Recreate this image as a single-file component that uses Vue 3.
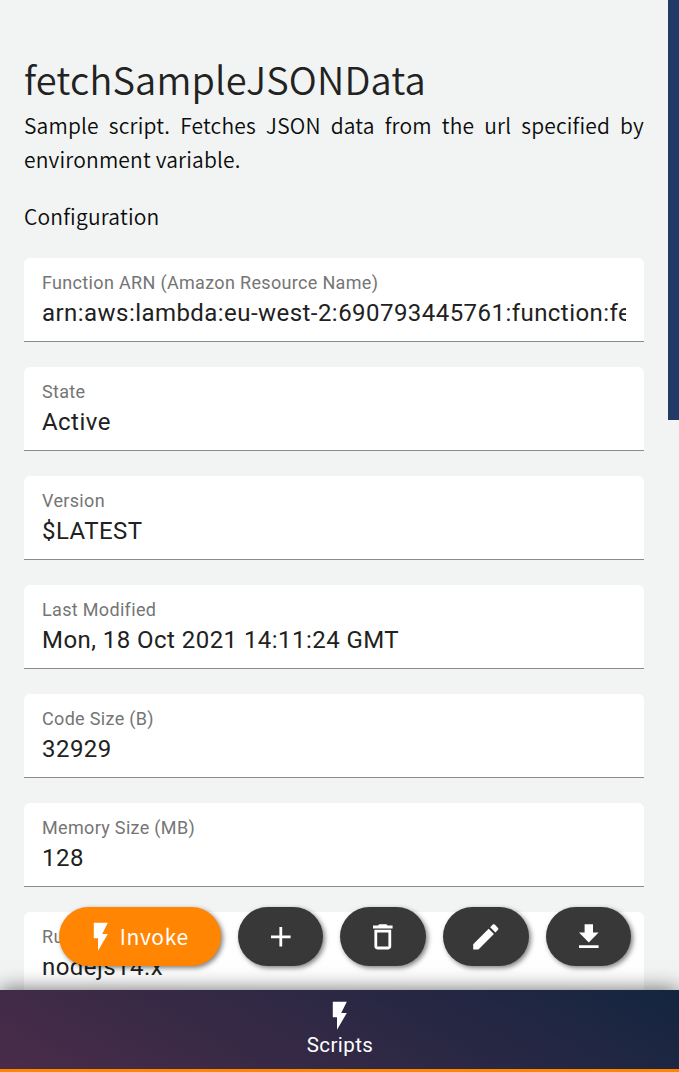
<script setup>
const fields = [
  { label: 'Function ARN (Amazon Resource Name)', value: 'arn:aws:lambda:eu-west-2:690793445761:function:fetchSampleJSONData' },
  { label: 'State', value: 'Active' },
  { label: 'Version', value: '$LATEST' },
  { label: 'Last Modified', value: 'Mon, 18 Oct 2021 14:11:24 GMT' },
  { label: 'Code Size (B)', value: '32929' },
  { label: 'Memory Size (MB)', value: '128' },
  { label: 'Runtime', value: 'nodejs14.x' },
]

const bolt = 'M7 2v11h3v9l7-12h-4l4-8z'

const actions = [
  { name: 'Add', icon: 'M19 13h-6v6h-2v-6H5v-2h6V5h2v6h6v2z' },
  { name: 'Delete', icon: 'M6 19c0 1.1.9 2 2 2h8c1.1 0 2-.9 2-2V7H6v12zM8 9h8v10H8V9zm7.5-5l-1-1h-5l-1 1H5v2h14V4z' },
  { name: 'Edit', icon: 'M3 17.25V21h3.75L17.81 9.94l-3.75-3.75L3 17.25zM20.71 7.04c.39-.39.39-1.02 0-1.41l-2.34-2.34c-.39-.39-1.02-.39-1.41 0l-1.83 1.83 3.75 3.75 1.83-1.83z' },
  { name: 'Download', icon: 'M19 9h-4V3H9v6H5l7 7 7-7zM5 18v2h14v-2H5z' },
]
</script>

<template>
  <div class="app">
    <div class="viewport">
      <main class="page">
        <h1>fetchSampleJSONData</h1>
        <p class="description">Sample script. Fetches JSON data from the url specified by environment variable.</p>
        <h2>Configuration</h2>
        <div class="fields">
          <div v-for="f in fields" :key="f.label" class="field">
            <div class="label">{{ f.label }}</div>
            <input class="value" :value="f.value" :aria-label="f.label" readonly />
          </div>
        </div>
      </main>
      <div class="track"><div class="thumb"></div></div>
      <div class="actions">
        <button class="invoke">
          <svg viewBox="0 0 24 24"><path :d="bolt" /></svg>
          <span>Invoke</span>
        </button>
        <button v-for="a in actions" :key="a.name" :aria-label="a.name">
          <svg viewBox="0 0 24 24"><path :d="a.icon" /></svg>
        </button>
      </div>
    </div>
    <nav>
      <svg viewBox="0 0 24 24"><path :d="bolt" /></svg>
      <span>Scripts</span>
    </nav>
  </div>
</template>

<style>
html, body { overflow: hidden; }
</style>

<style scoped>
.app {
  display: flex;
  flex-direction: column;
  height: 1072px;
  background: #f1f4f3;
  font-family: "Noto Sans CJK JP", sans-serif;
}
.viewport {
  position: relative;
  display: flex;
  height: 990px;
  overflow: hidden;
}
.page {
  flex: 1;
  min-width: 0;
  padding: 49px 24px 0;
}
h1 {
  margin: 0;
  font-size: 38px;
  font-weight: 350;
  line-height: 60px;
  letter-spacing: 0.15px;
  color: #222;
}
.description {
  margin: -1px 0 0;
  font-size: 21px;
  font-weight: 350;
  line-height: 34px;
  letter-spacing: 0.17px;
  text-align: justify;
  color: #0c0c0c;
}
h2 {
  margin: 24px 0 25px;
  font-size: 21px;
  font-weight: 350;
  line-height: 33px;
  letter-spacing: 0.2px;
  color: #0c0c0c;
}
.fields {
  display: grid;
  grid-template-columns: minmax(0, 1fr);
  gap: 25px;
}
.field {
  box-sizing: border-box;
  height: 84px;
  padding: 14px 18px 0;
  background: #fff;
  border-bottom: 1px solid #8b8b8b;
  border-radius: 6px 6px 0 0;
  font-family: Roboto, sans-serif;
}
.label {
  font-size: 18px;
  line-height: 22px;
  letter-spacing: 0.33px;
  color: #757575;
}
.value {
  display: block;
  width: 100%;
  height: 38px;
  padding: 0;
  border: 0;
  outline: 0;
  background: none;
  font: 24px Roboto, sans-serif;
  letter-spacing: 0.45px;
  color: #212121;
}
.track { width: 11px; }
.thumb { height: 420px; background: #233a66; }
.actions {
  position: absolute;
  left: 59px;
  bottom: 24px;
  display: flex;
  gap: 17.1px;
}
button {
  display: flex;
  align-items: center;
  justify-content: center;
  width: 85.5px;
  height: 59px;
  padding: 0;
  border: 0;
  border-radius: 30px;
  background: #383838;
  color: #fff;
  box-shadow: 2px 2px 5px rgba(0, 0, 0, 0.5);
}
.invoke {
  box-sizing: border-box;
  width: 161.8px;
  padding-right: 7px;
  gap: 2px;
  background: #ff8503;
  font: 400 21px "Noto Sans CJK JP", sans-serif;
  letter-spacing: 0.6px;
}
.invoke span { margin-top: -2px; }
svg {
  width: 33.6px;
  height: 33.6px;
  fill: currentColor;
}
nav {
  position: relative;
  box-sizing: border-box;
  display: flex;
  flex-direction: column;
  align-items: center;
  height: 82px;
  padding-top: 9px;
  border-bottom: 3px solid #ff8503;
  background: linear-gradient(30deg, #4a2c49, #142540) border-box;
  box-shadow: 0 0 20px rgba(0, 0, 0, 0.6);
  color: #fff;
  font: 400 20.5px/25px Roboto, sans-serif;
  letter-spacing: 0.4px;
}
nav span { padding-left: 1px; }
</style>
